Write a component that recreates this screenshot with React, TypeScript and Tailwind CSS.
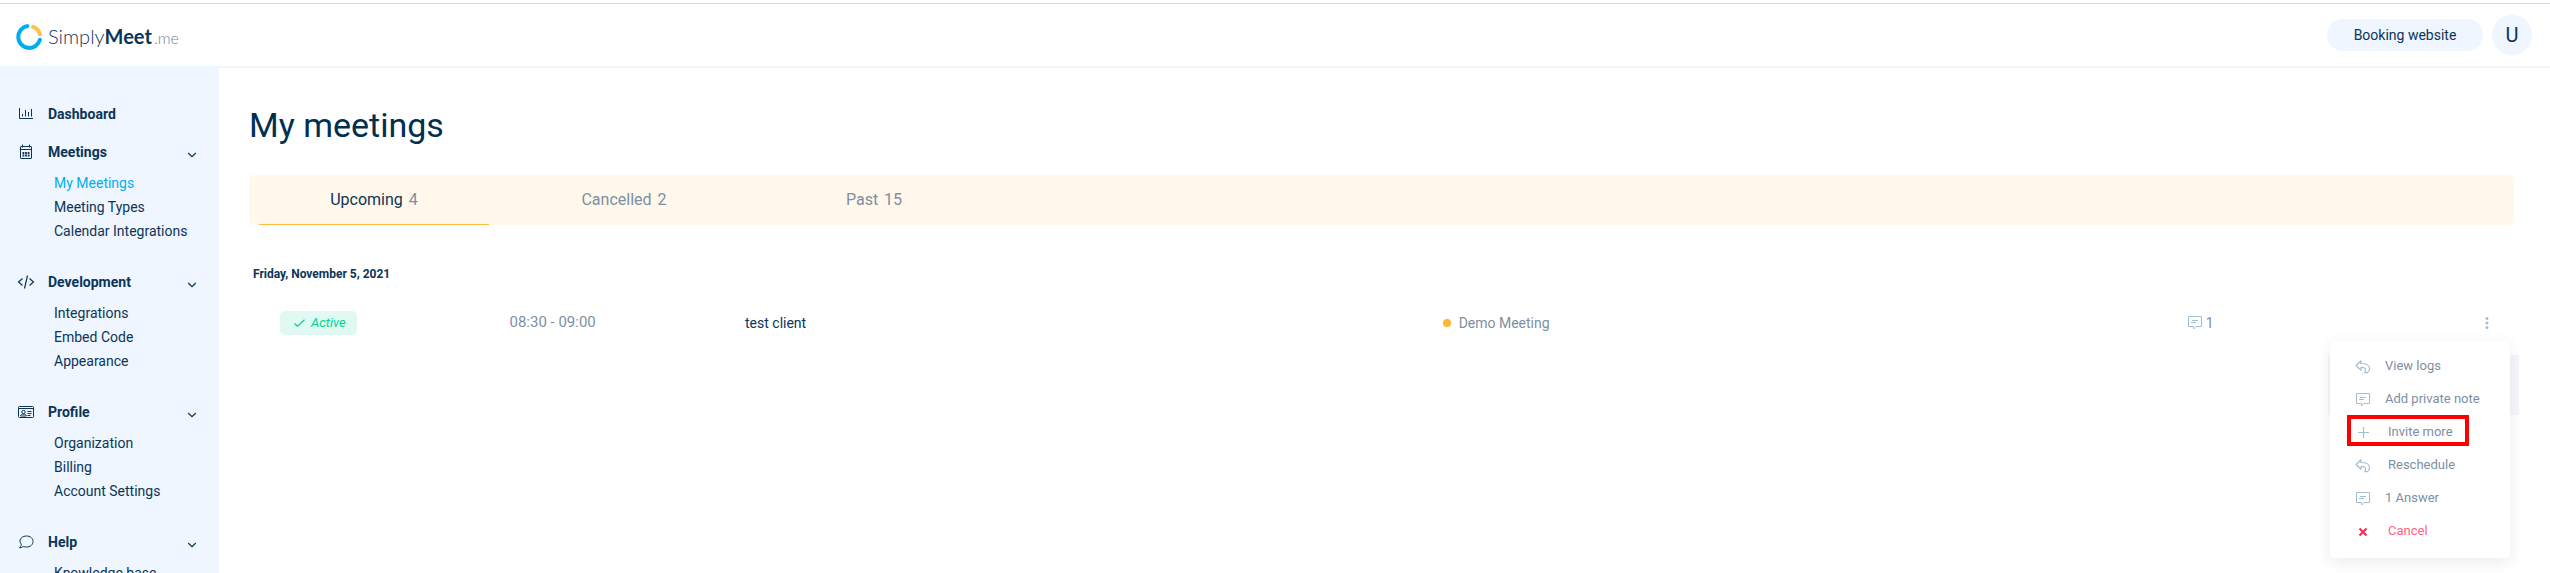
import { useState } from "react";
import type { ReactNode } from "react";

/* ---------- icons ---------- */

const ChartIcon = () => (
  <svg width="16" height="12" viewBox="0 0 16 12" fill="none" stroke="currentColor" strokeWidth="1">
    <path d="M1.500 0v10.500H15" />
    <path d="M4.500 6v2.500M7.500 2v6.500M10.500 4v4.500M13.500 1v7.500" />
  </svg>
);

const CalendarIcon = () => (
  <svg width="14" height="16" viewBox="0 0 14 16" fill="none" stroke="currentColor" strokeWidth="1">
    <rect x="1.500" y="2.500" width="11" height="12" rx="0.500" />
    <path d="M1.500 5.500h11M3.500 0.500v3M10.500 0.500v3" />
    <path d="M3.500 9h7M3.500 11.500h7" strokeWidth="1.800" strokeDasharray="1.800 0.800" />
  </svg>
);

const CodeIcon = () => (
  <svg width="18" height="16" viewBox="0 0 18 16" fill="none" stroke="currentColor" strokeWidth="1.200">
    <path d="M5.500 4.500 1.500 8l4 3.500M12.500 4.500l4 3.500-4 3.500M10.500 1.500l-3 13" />
  </svg>
);

const ProfileIcon = () => (
  <svg width="18" height="14" viewBox="0 0 18 14" fill="none" stroke="currentColor" strokeWidth="1">
    <rect x="1.500" y="1.500" width="15" height="11" rx="1" />
    <path d="M1.500 3.500h15M10.500 6.500h4M10.500 8.500h4M10.500 10.500h3" />
    <circle cx="6.500" cy="7" r="1.700" />
    <path d="M3.700 11c0-1.200 1.200-1.900 2.800-1.900s2.800.7 2.800 1.900z" />
  </svg>
);

const BubbleIcon = () => (
  <svg width="16" height="14" viewBox="0 0 16 14" fill="none" stroke="currentColor" strokeWidth="1">
    <path d="M8.500 1C4.800 1 2 3.200 2 6c0 1.200.5 2.300 1.300 3.200C3.200 10.500 2.500 12 1.500 12.800c1.500 0 2.800-.5 3.800-1.300 1 .4 2 .5 3.200.5 3.700 0 6.500-2.200 6.500-5.500S12.200 1 8.500 1z" />
  </svg>
);

const ChevronIcon = () => (
  <svg width="10" height="6" viewBox="0 0 10 6" fill="none" stroke="currentColor" strokeWidth="1.300">
    <path d="M1.200 1 5 4.600 8.800 1" />
  </svg>
);

const NoteIcon = () => (
  <svg width="14" height="14" viewBox="0 0 14 14" fill="none" stroke="currentColor" strokeWidth="1">
    <path d="M0.500 0.500h13v10H8L5.500 13v-2.500h-5z" strokeLinejoin="round" />
    <path d="M4 4.500h6M3 6.500h5" />
  </svg>
);

const ReplyIcon = () => (
  <svg width="16" height="14" viewBox="0 0 16 14" fill="none" stroke="currentColor" strokeWidth="1.200" strokeLinejoin="round">
    <path d="M6 .8 1 5.500l5 4.700V7.500c3-.2 4.500.8 4.500 2.500 0 1-.3 1.800-.8 2.700h2.500c1.600-1 2.300-2.400 2.300-4.200 0-3.200-3-5-8.500-5z" />
  </svg>
);

const PlusIcon = () => (
  <svg width="11" height="11" viewBox="0 0 11 11" stroke="currentColor" strokeWidth="1.200">
    <path d="M5.500 0v11M0 5.500h11" />
  </svg>
);

const CrossIcon = () => (
  <svg width="10" height="10" viewBox="0 0 10 10" stroke="currentColor" strokeWidth="2.200">
    <path d="M1.500 1.500l7 7M8.500 1.500l-7 7" />
  </svg>
);

const LogoRing = () => (
  <svg width="26" height="26" viewBox="0 0 26 26" fill="none" strokeWidth="4" strokeLinecap="round">
    <path d="M11.300 2.100A11 11 0 1 0 23.900 15.800" stroke="#00aeef" />
    <path d="M17.200 2.900A11 11 0 0 1 23.900 10.300" stroke="#ffc04d" />
  </svg>
);

/* ---------- data ---------- */

interface NavSection {
  label: string;
  icon: ReactNode;
  items: string[];
}

const SECTIONS: NavSection[] = [
  { label: "Meetings", icon: <CalendarIcon />, items: ["My Meetings", "Meeting Types", "Calendar Integrations"] },
  { label: "Development", icon: <CodeIcon />, items: ["Integrations", "Embed Code", "Appearance"] },
  { label: "Profile", icon: <ProfileIcon />, items: ["Organization", "Billing", "Account Settings"] },
  { label: "Help", icon: <BubbleIcon />, items: ["Knowledge base"] },
];

const TABS = [
  { label: "Upcoming", count: 4 },
  { label: "Cancelled", count: 2 },
  { label: "Past", count: 15 },
];

/* ---------- layout parts ---------- */

const Header = () => (
  <header className="flex items-center justify-between border-b-2 border-[#f0f6fe] h-16 pl-4 pr-[18px] shrink-0">
    <a href="#" className="flex items-center gap-1.5 pt-1" aria-label="SimplyMeet.me">
      <LogoRing />
      <span className="font-[Lato] text-xl leading-6 text-[#0b3558]">
        <span className="font-light">Simply</span>
        <span className="font-bold">Meet</span>
        <span className="pl-0.5 text-base leading-6 font-light text-[#7c8299]">.me</span>
      </span>
    </a>
    <div className="flex items-center gap-[9px]">
      <button className="h-8 w-[156px] rounded-full bg-blue-50 text-sm">Booking website</button>
      <button className="h-10 w-10 rounded-full bg-blue-50 text-xl" aria-label="User menu">U</button>
    </div>
  </header>
);

const Sidebar = () => {
  const [active, setActive] = useState("My Meetings");

  return (
    <nav className="w-[219px] shrink-0 overflow-hidden bg-blue-50 pt-[27px]">
      <a href="#" className="flex h-[38px] items-center gap-[13px] pl-[17px] text-sm font-bold">
        <span className="flex w-[18px] justify-center"><ChartIcon /></span>
        Dashboard
      </a>
      {SECTIONS.map((section) => (
        <div key={section.label} className="mb-5">
          <button className="flex h-[38px] w-full items-center gap-[13px] pl-[17px] pr-[22px] text-left text-sm font-bold">
            <span className="flex w-[18px] justify-center">{section.icon}</span>
            <span className="flex-1">{section.label}</span>
            <span className="pt-1.5"><ChevronIcon /></span>
          </button>
          <ul>
            {section.items.map((item) => (
              <li key={item} className="h-6">
                <a
                  href="#"
                  onClick={() => setActive(item)}
                  className={`block pl-[54px] text-sm leading-6 ${item === active ? "text-[#00aeef]" : ""}`}
                >
                  {item}
                </a>
              </li>
            ))}
          </ul>
        </div>
      ))}
    </nav>
  );
};

const MenuItem = ({ icon, label, wide, danger, marked }: {
  icon: ReactNode;
  label: string;
  wide?: boolean;
  danger?: boolean;
  marked?: boolean;
}) => (
  <li className="relative h-[33px]">
    <button
      className={`flex h-full w-full items-center pl-[25px] text-left text-[13px] ${danger ? "text-[#ff6384]" : "text-[#7d8fa3]"}`}
    >
      <span className={`flex w-4 justify-center ${danger ? "text-[#ff2d55]" : "text-[#a3bfd3]"}`}>{icon}</span>
      <span className={wide ? "pl-[17px]" : "pl-3.5"}>{label}</span>
    </button>
    {marked && <span className="pointer-events-none absolute -top-px bottom-[3px] left-[17px] w-[122px] border-4 border-[#ff0000]" />}
  </li>
);

const RowMenu = () => (
  <div className="absolute right-1 top-[30px] w-[180px]">
    <div className="absolute -left-0.5 -right-[9px] top-3.5 h-[60px] bg-[#f4f5fd]" />
    <ul className="relative rounded-[5px] bg-white pt-[9px] pb-2.5 shadow-[0_4px_16px_rgba(0,0,0,0.08)]">
      <MenuItem icon={<ReplyIcon />} label="View logs" />
      <MenuItem icon={<NoteIcon />} label="Add private note" />
      <MenuItem icon={<PlusIcon />} label="Invite more" wide marked />
      <MenuItem icon={<ReplyIcon />} label="Reschedule" wide />
      <MenuItem icon={<NoteIcon />} label="1 Answer" />
      <MenuItem icon={<CrossIcon />} label="Cancel" wide danger />
    </ul>
  </div>
);

const MeetingsTable = () => {
  const [open, setOpen] = useState(true);

  return (
    <table className="mt-7 w-full table-fixed text-left text-sm text-[#7d8fa3]">
      <colgroup>
        <col className="w-[11.5%]" />
        <col className="w-[10.4%]" />
        <col className="w-[30.8%]" />
        <col className="w-[32.9%]" />
        <col />
      </colgroup>
      <tbody>
        <tr className="h-6">
          <td className="pl-[31px]">
            <span className="flex h-6 w-[77px] items-center gap-1.5 rounded-[5px] bg-[#e0f9f2] pl-3.5 text-[13px] italic text-[#00d494]">
              <svg width="11" height="8" viewBox="0 0 11 8" fill="none" stroke="currentColor" strokeWidth="1.200">
                <path d="M.5 4.500 3.500 7.300 10.500.700" />
              </svg>
              Active
            </span>
          </td>
          <td className="text-[15px]">08:30 - 09:00</td>
          <td className="text-[#0b3558]">test client</td>
          <td>
            <span className="flex items-center gap-2">
              <span className="h-2 w-2 rounded-full bg-[#ffb432]" />
              Demo Meeting
            </span>
          </td>
          <td className="relative">
            <div className="flex items-center justify-between pr-[22px]">
              <span className="flex items-center gap-1">
                <span className="text-[#a3bfd3]"><NoteIcon /></span>
                1
              </span>
              <button onClick={() => setOpen(!open)} className="flex w-2.5 justify-center text-[#a3bfd3]" aria-label="More actions">
                <svg width="4" height="12" viewBox="0 0 4 12" fill="currentColor">
                  <circle cx="2" cy="1.500" r="1.500" />
                  <circle cx="2" cy="6" r="1.500" />
                  <circle cx="2" cy="10.500" r="1.500" />
                </svg>
              </button>
            </div>
            {open && <RowMenu />}
          </td>
        </tr>
      </tbody>
    </table>
  );
};

const App = () => {
  const [tab, setTab] = useState("Upcoming");

  return (
    <div className="flex h-screen flex-col overflow-hidden bg-white pt-[3px] font-[Roboto,sans-serif] text-[#0b3558]">
      <div className="h-px shrink-0 bg-[#d9d9dc]" />
      <Header />
      <div className="flex min-h-0 flex-1">
        <Sidebar />
        <main className="min-w-0 flex-1 pl-[30px] pr-9 pt-[37px]">
          <h1 className="text-[34px] leading-10 text-[#003050]">My meetings</h1>

          <div role="tablist" className="mt-[30px] flex h-[50px] gap-5 rounded-[5px] bg-[#fff8eb] px-2.5">
            {TABS.map(({ label, count }) => (
              <button
                key={label}
                role="tab"
                aria-selected={tab === label}
                onClick={() => setTab(label)}
                className={`w-[230px] border-b text-base ${tab === label ? "border-[#ffbc42]" : "border-transparent text-[#7d8fa3]"}`}
              >
                {label} <span className="pl-0.5 text-[#7d8fa3]">{count}</span>
              </button>
            ))}
          </div>

          <h2 className="mt-10 pl-1 text-xs leading-[18px] font-bold">Friday, November 5, 2021</h2>
          <MeetingsTable />
        </main>
      </div>
    </div>
  );
};

export default App;
